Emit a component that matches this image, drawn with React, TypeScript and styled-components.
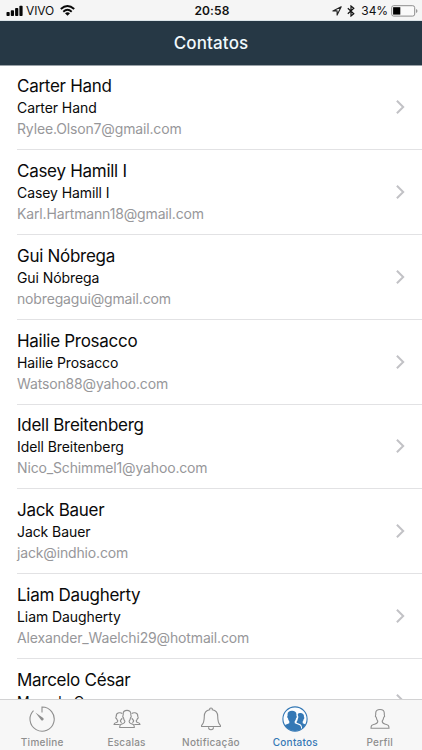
import React from "react";
import styled, { createGlobalStyle } from "styled-components";

const GlobalStyle = createGlobalStyle`
  * { box-sizing: border-box; }
  body { margin: 0; background: #fff; font-family: Inter, "Liberation Sans", sans-serif; }
`;

const Screen = styled.div`
  width: 422px;
  height: 750px;
  display: flex;
  flex-direction: column;
  overflow: hidden;
  background: #fff;
`;

const StatusBar = styled.div`
  flex: none;
  height: 21px;
  display: grid;
  grid-template-columns: 1fr auto 1fr;
  align-items: center;
  padding: 0 4px 0 6px;
  background: #f5f5f5;
  border-bottom: 1px solid #dce5e9;
  font-size: 12px;
  line-height: 20px;
  color: #111;
  svg { display: block; flex: none; }
`;

const StatusGroup = styled.div<{ $end?: boolean }>`
  display: flex;
  align-items: center;
  justify-content: ${(p) => (p.$end ? "flex-end" : "flex-start")};
`;

const Carrier = styled.span`
  margin: 1px 6px 0 3px;
  font-size: 12px;
  letter-spacing: -0.1px;
`;

const Clock = styled.span`
  padding-top: 1px;
  font-weight: 600;
  font-size: 12px;
  letter-spacing: 0.1px;
`;

const BluetoothSlot = styled.span`
  margin-left: 5px;
`;

const Percent = styled.span`
  margin: 1px 3px 0 6px;
  letter-spacing: -0.1px;
`;

const Header = styled.header`
  flex: none;
  height: 45px;
  display: flex;
  align-items: center;
  justify-content: center;
  background: #263845;
  border-bottom: 1px solid #9aa2a8;
`;

const Title = styled.h1`
  margin: 0;
  font-size: 17px;
  line-height: 22px;
  font-weight: 500;
  letter-spacing: 0.15px;
  color: #f1f8fc;
`;

const List = styled.main`
  flex: 1;
  min-height: 0;
  overflow: hidden;
`;

const Row = styled.div`
  height: 84.8px;
  margin-left: 17px;
  padding: 9.9px 17px 0 0;
  display: flex;
  justify-content: space-between;
  border-bottom: 1px solid #e2e2e4;
  svg { flex: none; margin-top: 24px; }
  &:first-child { height: 84.2px; padding-top: 9.4px; }
`;

const Name = styled.div`
  font-size: 17px;
  line-height: 23px;
  letter-spacing: -0.28px;
  color: #0a0a0a;
`;

const Nick = styled.div`
  margin-top: -1px;
  font-size: 14px;
  line-height: 21px;
  letter-spacing: -0.08px;
  color: #0a0a0a;
`;

const Email = styled.div`
  font-size: 14px;
  line-height: 21px;
  letter-spacing: -0.15px;
  color: #97979a;
`;

const TabBar = styled.nav`
  flex: none;
  height: 51px;
  display: grid;
  grid-template-columns: repeat(5, 1fr);
  background: #f7f7f7;
  border-top: 1px solid #d2d2d3;
`;

const Tab = styled.div<{ $active?: boolean }>`
  display: flex;
  flex-direction: column;
  align-items: center;
  padding-top: 5px;
  color: ${(p) => (p.$active ? "#3478b5" : "#8e8e8e")};
  svg { display: block; }
`;

const TabLabel = styled.span`
  margin-top: 2px;
  font-size: 10px;
  line-height: 14px;
  font-weight: 500;
  letter-spacing: 0.25px;
`;

const contacts = [
  ["Carter Hand", "Carter Hand", "Rylee.Olson7@gmail.com"],
  ["Casey Hamill I", "Casey Hamill I", "Karl.Hartmann18@gmail.com"],
  ["Gui Nóbrega", "Gui Nóbrega", "nobregagui@gmail.com"],
  ["Hailie Prosacco", "Hailie Prosacco", "Watson88@yahoo.com"],
  ["Idell Breitenberg", "Idell Breitenberg", "Nico_Schimmel1@yahoo.com"],
  ["Jack Bauer", "Jack Bauer", "jack@indhio.com"],
  ["Liam Daugherty", "Liam Daugherty", "Alexander_Waelchi29@hotmail.com"],
  ["Marcelo César", "Marcelo Cesar", ""],
];

const Signal = () => (
  <svg width="17" height="11" viewBox="0 0 17 11" fill="#080808">
    <rect x="0.5" y="7" width="3.2" height="4" rx="0.8" />
    <rect x="4.8" y="5.3" width="3.2" height="5.7" rx="0.8" />
    <rect x="9.1" y="3" width="3.2" height="8" rx="0.8" />
    <rect x="13.4" y="0.8" width="3.2" height="10.2" rx="0.8" />
  </svg>
);

const Wifi = () => (
  <svg width="15" height="11" viewBox="0 0 15 11" fill="none" stroke="#080808" strokeWidth="1.9">
    <path d="M0.8 4Q7.5 -2 14.2 4" />
    <path d="M3.3 6.7Q7.5 2.9 11.7 6.7" />
    <path d="M7.5 10.8L5 8.3Q7.5 6.2 10 8.3Z" fill="#080808" stroke="none" />
  </svg>
);

const LocationArrow = () => (
  <svg width="10" height="10" viewBox="0 0 10 10" fill="none" stroke="#222" strokeWidth="1.1" strokeLinejoin="round">
    <path d="M9.2 0.8L0.9 4.9H5.1V9.1Z" />
  </svg>
);

const Bluetooth = () => (
  <svg width="8" height="12" viewBox="0 0 8 12" fill="none" stroke="#111" strokeWidth="1.2">
    <path d="M0.8 3.2L6.8 8.7L4 11V1L6.8 3.3L0.8 8.8" />
  </svg>
);

const Battery = () => (
  <svg width="27" height="12" viewBox="0 0 27 12">
    <rect x="0.7" y="0.7" width="23" height="10.4" rx="2" fill="#fafafa" stroke="#8d8d8d" strokeWidth="1" />
    <rect x="2.1" y="2.2" width="7.2" height="7.4" fill="#000" />
    <path d="M25 4V8Q26.5 7.5 26.5 6T25 4Z" fill="#999" />
  </svg>
);

const Chevron = () => (
  <svg width="10" height="16" viewBox="0 0 10 16" fill="none" stroke="#c2c2c6" strokeWidth="2">
    <path d="M1.9 1.7L8.2 8L1.9 14.3" />
  </svg>
);

const TimerIcon = () => (
  <svg width="28" height="28" viewBox="0 0 28 28" fill="none" stroke="currentColor" strokeWidth="1.1">
    <path d="M14 7.5V2A12.1 12.1 0 1 1 5.5 5.6" />
    <path d="M7.4 7.4L15.2 12.9A1.5 1.5 0 0 1 13.1 15.1Z" fill="currentColor" stroke="none" />
  </svg>
);

const GroupIcon = () => (
  <svg width="28" height="28" viewBox="0 0 28 28" fill="none" stroke="currentColor" strokeWidth="1.1" strokeLinejoin="round">
    <path d="M6.7 22.5H21.3C21.3 19.6 20.6 19.4 18.3 18.8C16.7 18.4 16.1 18 16.1 16.2C17 15.2 17.3 14.2 17.5 12.8C18.5 12 18.4 10.7 17.8 10.2V8.5C17.8 6.5 16.2 5.4 14 5.4S10.2 6.5 10.2 8.5V10.2C9.6 10.7 9.5 12 10.5 12.8C10.7 14.2 11 15.2 11.9 16.2C11.9 18 11.3 18.4 9.7 18.8C7.4 19.4 6.7 19.6 6.7 22.5Z" />
    <path d="M9.2 8.8C8.5 7.6 3 6.5 3.2 11.5C2.3 12.6 3.1 13.5 3.6 13.6C3.8 14.8 4.5 15.3 4.8 15.8C4.8 17.2 4.4 17.2 3.3 17.5C1.4 17.9 1 18.2 1 19.5H6.7M9.4 13.4C8.6 13.6 8 14.8 7.3 15.8C7.3 17 7.5 17.2 8.8 17.5" />
    <path d="M18.8 8.8C19.5 7.6 25 6.5 24.8 11.5C25.7 12.6 24.9 13.5 24.4 13.6C24.2 14.8 23.5 15.3 23.2 15.8C23.2 17.2 23.6 17.2 24.7 17.5C26.6 17.9 27 18.2 27 19.5H21.3M18.6 13.4C19.4 13.6 20 14.8 20.7 15.8C20.7 17 20.5 17.2 19.2 17.5" />
  </svg>
);

const BellIcon = () => (
  <svg width="28" height="28" viewBox="0 0 28 28" fill="none" stroke="currentColor" strokeWidth="1.1">
    <path d="M12.7 4.8C12.2 2.4 15.8 2.4 15.3 4.8C18.7 5.4 20.7 8 20.7 11.3C20.7 16.3 21 18.3 23.4 20.4V21.5H4.6V20.4C7 18.3 7.3 16.3 7.3 11.3C7.3 8 9.3 5.4 12.7 4.8Z" />
    <path d="M11.5 22.3C11.5 25.6 16.5 25.6 16.5 22.3" />
  </svg>
);

const ContactsIcon = () => (
  <svg width="28" height="28" viewBox="0 0 28 28">
    <defs>
      <clipPath id="contacts-disc"><circle cx="14" cy="14" r="11.9" /></clipPath>
    </defs>
    <circle cx="14" cy="14" r="12.1" fill="#fbfdff" stroke="currentColor" strokeWidth="1.1" />
    <g clipPath="url(#contacts-disc)" fill="currentColor">
      <path d="M1 27V21L8.3 18.3V16.2C7.4 15.3 7.1 14.3 7 13.3C6.1 12.7 6 11.2 6.6 10.7C6.1 7.2 8 5.8 11 5.8S15.9 7.2 15.4 10.7C16 11.2 15.9 12.7 15 13.3C14.9 14.3 14.6 15.3 13.7 16.2V18.3L18.7 20.2C20 20.8 20.4 23 20.4 27Z" />
      <path d="M16.8 9C18.2 7.5 23.4 7.2 23 12C23.6 12.5 23.3 14 22.6 14.3C22.4 15.6 22.1 16 21.7 16.5V18.2L25.7 20V26H21.2C21.3 21.5 20.5 19.7 18.8 19L15.6 17.7V16.8C16.3 15.8 16.7 14.8 16.8 13.9C17.5 13 17.5 11.3 16.9 10.6Z" />
    </g>
  </svg>
);

const ProfileIcon = () => (
  <svg width="28" height="28" viewBox="0 0 28 28" fill="none" stroke="currentColor" strokeWidth="1.1">
    <path d="M5 23.2C5 20 6.2 20 9.2 19C11.1 18.4 11.8 17.8 11.8 16C10.9 15 10.5 14 10.3 12.5C9.2 11.8 9.3 10.5 9.7 9.8V8.2C9.7 5.8 11.4 4.5 14 4.5S18.3 5.8 18.3 8.2V9.8C18.7 10.5 18.8 11.8 17.7 12.5C17.5 14 17.1 15 16.2 16C16.2 17.8 16.9 18.4 18.8 19C21.8 20 23 20 23 23.2Z" />
  </svg>
);

const tabs = [
  { label: "Timeline", icon: TimerIcon },
  { label: "Escalas", icon: GroupIcon },
  { label: "Notificação", icon: BellIcon },
  { label: "Contatos", icon: ContactsIcon, active: true },
  { label: "Perfil", icon: ProfileIcon },
];

export default function App() {
  return (
    <Screen>
      <GlobalStyle />
      <StatusBar>
        <StatusGroup>
          <Signal />
          <Carrier>VIVO</Carrier>
          <Wifi />
        </StatusGroup>
        <Clock>20:58</Clock>
        <StatusGroup $end>
          <LocationArrow />
          <BluetoothSlot><Bluetooth /></BluetoothSlot>
          <Percent>34%</Percent>
          <Battery />
        </StatusGroup>
      </StatusBar>
      <Header><Title>Contatos</Title></Header>
      <List>
        {contacts.map(([name, nick, email]) => (
          <Row key={name}>
            <div>
              <Name>{name}</Name>
              <Nick>{nick}</Nick>
              <Email>{email}</Email>
            </div>
            <Chevron />
          </Row>
        ))}
      </List>
      <TabBar>
        {tabs.map(({ label, icon: Icon, active }) => (
          <Tab key={label} $active={active}>
            <Icon />
            <TabLabel>{label}</TabLabel>
          </Tab>
        ))}
      </TabBar>
    </Screen>
  );
}
